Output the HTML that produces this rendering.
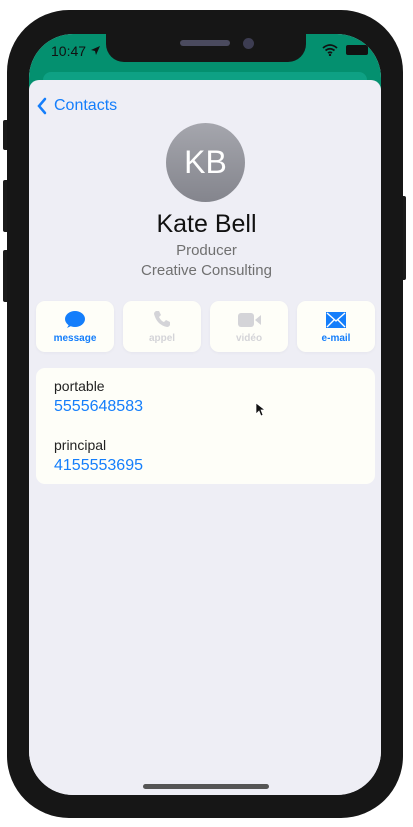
<!DOCTYPE html>
<html><head><style>
*{margin:0;padding:0;box-sizing:border-box}
body{width:413px;height:827px;background:#fff;position:relative;overflow:hidden;font-family:"Liberation Sans",sans-serif}
.a{position:absolute}
.btn{position:absolute;top:301px;width:78px;height:51px;background:#fefef8;border-radius:9px;text-align:center;font-size:10px;font-weight:bold;box-shadow:0 1px 3px rgba(0,0,0,0.04)}
.btn span{position:absolute;left:0;right:0;top:32px}
</style></head><body>
<div class="a" style="left:3px;top:120px;width:6px;height:30px;background:#1a1a1a;border-radius:2px"></div>
<div class="a" style="left:3px;top:180px;width:6px;height:52px;background:#1a1a1a;border-radius:2px"></div>
<div class="a" style="left:3px;top:250px;width:6px;height:52px;background:#1a1a1a;border-radius:2px"></div>
<div class="a" style="left:400px;top:196px;width:6px;height:84px;background:#1a1a1a;border-radius:2px"></div>
<div class="a" style="left:7px;top:10px;width:396px;height:808px;background:#161616;border-radius:62px"></div>
<div class="a" style="left:29px;top:34px;width:352px;height:761px;background:#eeeef5;border-radius:44px;overflow:hidden">
 <div class="a" style="left:0;top:0;width:352px;height:60px;background:#04906f"></div>
 <div class="a" style="left:14px;top:38px;width:324px;height:20px;background:#0ea184;border-radius:8px"></div>
 <div class="a" style="left:0;top:46px;width:352px;height:715px;background:#eeeef5;border-radius:10px 10px 0 0"></div>
 <div class="a" style="left:22px;top:9px;font-size:14px;color:#111">10:47</div>
 <svg class="a" style="left:61px;top:11px" width="11" height="11"><path d="M10 1 L1 5 L5 6 L6 10Z" fill="#111"/></svg>
 <svg class="a" style="left:293px;top:10px" width="16" height="12"><path d="M1 4 Q8 -2 15 4 M3.5 6.5 Q8 3 12.5 6.5 M6 9 Q8 7.5 10 9" stroke="#111" stroke-width="1.8" fill="none"/><circle cx="8" cy="11" r="1.2" fill="#111"/></svg>
 <div class="a" style="left:317px;top:11px;width:22px;height:10px;background:#111;border-radius:2px"></div>
</div>
<div class="a" style="left:106px;top:34px;width:200px;height:28px;background:#161616;border-radius:0 0 18px 18px"></div>
<div class="a" style="left:180px;top:40px;width:50px;height:6px;background:#4a4a5e;border-radius:3px"></div>
<div class="a" style="left:243px;top:38px;width:11px;height:11px;background:#3d3d52;border-radius:50%"></div>
<svg class="a" style="left:36px;top:97px" width="12" height="18"><path d="M9 2 L3 9 L9 16" stroke="#147efb" stroke-width="2.5" fill="none" stroke-linecap="round"/></svg>
<div class="a" style="left:54px;top:97px;font-size:16px;color:#147efb">Contacts</div>
<div class="a" style="left:166px;top:123px;width:79px;height:79px;border-radius:50%;background:linear-gradient(#a5a6ad,#84858d);color:#fff;font-size:32px;text-align:center;line-height:79px">KB</div>
<div class="a" style="left:0;width:413px;top:210px;text-align:center;font-size:25px;color:#111">Kate Bell</div>
<div class="a" style="left:0;width:413px;top:242px;text-align:center;font-size:15px;color:#707070">Producer</div>
<div class="a" style="left:0;width:413px;top:262px;text-align:center;font-size:15px;color:#707070">Creative Consulting</div>
<div class="btn" style="left:36px;color:#147efb"><svg class="a" style="left:28px;top:9px" width="22" height="20"><ellipse cx="11" cy="9" rx="10" ry="8" fill="#147efb"/><path d="M3 18 L6 13 L9 15Z" fill="#147efb"/></svg><span>message</span></div>
<div class="btn" style="left:123px;color:#d4d4d8"><svg class="a" style="left:30px;top:9px" width="18" height="18"><path d="M3 1 L6 1 L8 5 L6 7 Q8 11 11 12 L13 10 L17 12 L17 15 Q16 17 14 17 Q4 15 1 4 Q1 2 3 1Z" fill="#d4d4d8"/></svg><span>appel</span></div>
<div class="btn" style="left:210px;color:#d4d4d8"><svg class="a" style="left:28px;top:11px" width="24" height="16"><rect x="0" y="1" width="16" height="14" rx="3" fill="#d4d4d8"/><path d="M17 8 L23 3 V13Z" fill="#d4d4d8"/></svg><span>vidéo</span></div>
<div class="btn" style="left:297px;color:#147efb"><svg class="a" style="left:29px;top:11px" width="20" height="16"><rect x="0" y="0" width="20" height="16" fill="#147efb"/><path d="M1 1 L10 9 L19 1 M1 15 L8 8 M19 15 L12 8" stroke="#fff" stroke-width="1.4" fill="none"/></svg><span>e-mail</span></div>
<div class="a" style="left:36px;top:368px;width:339px;height:116px;background:#fefef8;border-radius:9px"></div>
<div class="a" style="left:54px;top:378px;font-size:14px;color:#222">portable</div>
<div class="a" style="left:54px;top:398px;font-size:16px;color:#147efb">5555648583</div>
<div class="a" style="left:54px;top:437px;font-size:14px;color:#222">principal</div>
<div class="a" style="left:54px;top:457px;font-size:16px;color:#147efb">4155553695</div>
<svg class="a" style="left:255px;top:402px" width="10" height="15"><path d="M1 1 V12 L4 9 L6 14 L8 13 L6 8 L10 8Z" fill="#111" stroke="#fff" stroke-width=".7"/></svg>
<div class="a" style="left:143px;top:784px;width:126px;height:5px;background:#555;border-radius:3px"></div>
</body></html>
